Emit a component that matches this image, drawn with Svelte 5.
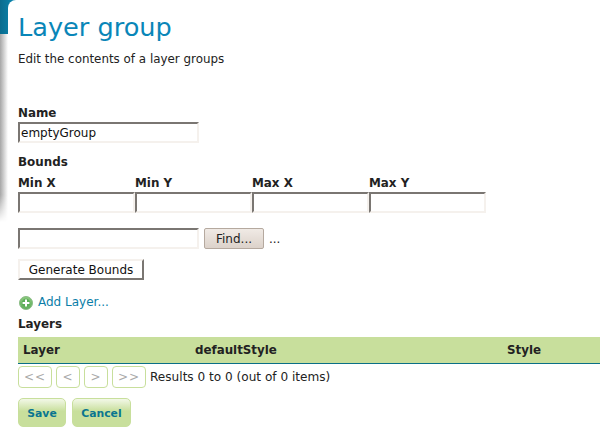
<script lang="ts">
  const bounds = ["Min X", "Min Y", "Max X", "Max Y"];
  const pager = ["<<", "<", ">", ">>"];
</script>

<div class="page">
  <div class="sidebar"></div>
  <main class="content">
    <h1>Layer group</h1>
    <p class="intro">Edit the contents of a layer groups</p>

    <label class="label name-label" for="name">Name</label>
    <input id="name" class="field wide" type="text" value="emptyGroup" />

    <div class="label bounds-label">Bounds</div>
    <div class="bounds">
      {#each bounds as b}
        <div class="bound">
          <span class="label">{b}</span>
          <input class="field bound-input" type="text" />
        </div>
      {/each}
    </div>

    <div class="find-row">
      <input class="field wide" type="text" />
      <button class="find">Find...</button>
      <span class="dots">...</span>
    </div>

    <button class="generate">Generate Bounds</button>

    <a class="add" href="#add">
      <svg width="14" height="14" viewBox="0 0 14 14">
        <defs>
          <radialGradient id="ball" cx="50%" cy="35%" r="65%">
            <stop offset="0" stop-color="#a8dc96" />
            <stop offset="1" stop-color="#5aa957" />
          </radialGradient>
        </defs>
        <circle cx="7" cy="7" r="6.5" fill="url(#ball)" stroke="#8cbc86" stroke-width="1" />
        <circle cx="7" cy="7" r="4.4" fill="#5cae58" />
        <path d="M7 3.6v6.8M3.6 7h6.8" stroke="#fff" stroke-width="2" />
      </svg>
      Add Layer...
    </a>

    <div class="label layers-label">Layers</div>
    <div class="table-head">
      <span class="col-layer">Layer</span>
      <span class="col-default">defaultStyle</span>
      <span class="col-style">Style</span>
    </div>

    <div class="pager">
      {#each pager as p}
        <button class="page-btn" disabled>{p}</button>
      {/each}
      <span class="results">Results 0 to 0 (out of 0 items)</span>
    </div>

    <div class="actions">
      <button class="action">Save</button>
      <button class="action">Cancel</button>
    </div>
  </main>
</div>

<style>
  :global(body) {
    margin: 0;
    background: #fff;
  }
  .page {
    display: flex;
    width: 600px;
    height: 448px;
    overflow: hidden;
    font-family: "DejaVu Sans", sans-serif;
    font-size: 11.9px;
    color: #222;
  }
  .sidebar {
    flex: 0 0 16px;
    height: 224px;
    background:
      linear-gradient(to right, #0a6c8e, #0a8ab4) top / 100% 34px no-repeat,
      linear-gradient(to right, #a6a6a6, #fff 8px);
    mask-image: linear-gradient(to bottom, #000 195px, transparent 222px);
  }
  .content {
    flex: 1;
    min-width: 0;
    margin-left: -8px;
    padding: 0 0 0 10px;
    background: #fff;
    border-top-left-radius: 8px;
    display: flex;
    flex-direction: column;
    align-items: flex-start;
    position: relative;
  }
  h1 {
    margin: 12px 0 0;
    font-size: 25.6px;
    line-height: 30px;
    font-weight: normal;
    color: #0986b8;
  }
  .intro {
    margin: 10px 0 0;
    line-height: 15px;
  }
  .label {
    font-weight: bold;
    line-height: 14px;
    display: block;
  }
  .name-label {
    margin-top: 39px;
  }
  .field {
    box-sizing: border-box;
    height: 21px;
    margin: 0;
    padding: 1px;
    border-style: solid;
    border-width: 2px;
    border-color: #7a7672 #f5f1ed #f5f1ed #7a7672;
    background: #fff;
    font: 12px "DejaVu Sans", sans-serif;
    color: #111;
  }
  .wide {
    width: 181px;
  }
  #name {
    margin-top: 2px;
  }
  .bounds-label {
    margin-top: 12px;
  }
  .bounds {
    display: flex;
    margin-top: 7px;
  }
  .bound {
    width: 117px;
  }
  .bound-input {
    width: 117px;
    display: block;
    margin-top: 2px;
  }
  .find-row {
    display: flex;
    align-items: center;
    margin-top: 15px;
    height: 21px;
  }
  .find {
    box-sizing: border-box;
    width: 60px;
    height: 21px;
    margin-left: 5px;
    padding: 0;
    border: 1px solid #b5a99f;
    border-radius: 2px;
    background: linear-gradient(#f0eae5, #dcd2ca);
    font: 12px "DejaVu Sans", sans-serif;
    color: #222;
  }
  .dots {
    margin-left: 5px;
  }
  .generate {
    box-sizing: border-box;
    width: 126px;
    height: 21px;
    margin-top: 10px;
    padding: 0;
    border-style: solid;
    border-width: 2px;
    border-color: #f5f1ed #7a7672 #7a7672 #f5f1ed;
    background: #fff;
    font: 12px "DejaVu Sans", sans-serif;
    color: #111;
  }
  .add {
    display: flex;
    align-items: center;
    gap: 5px;
    margin-top: 15px;
    margin-left: 1px;
    line-height: 15px;
    font-size: 12px;
    color: #0a7ea8;
    text-decoration: none;
  }
  .layers-label {
    margin-top: 7px;
  }
  .table-head {
    box-sizing: border-box;
    width: 582px;
    height: 27px;
    margin-top: 6px;
    display: flex;
    align-items: center;
    background: #c8df9c;
    border-bottom: 1px solid #0a6f86;
    font-weight: bold;
    font-size: 11.85px;
  }
  .col-layer {
    margin-left: 5px;
    width: 172px;
  }
  .col-default {
    width: 312px;
  }
  .pager {
    display: flex;
    align-items: center;
    gap: 4px;
    margin-top: 2px;
  }
  .page-btn {
    box-sizing: border-box;
    height: 22px;
    width: 24px;
    padding: 0;
    border: 1px solid #c8df9c;
    border-radius: 4px;
    background: #fff;
    font: 12px "DejaVu Sans", sans-serif;
    letter-spacing: 1px;
    color: #aaa;
  }
  .page-btn:first-child,
  .page-btn:nth-child(4) {
    width: 34px;
  }
  .results {
    font-size: 12.1px;
  }
  .actions {
    display: flex;
    gap: 6px;
    margin-top: 10px;
  }
  .action {
    box-sizing: border-box;
    height: 29px;
    width: 48px;
    padding: 1px 0 0;
    border: 1px solid #c8df9c;
    border-radius: 5px;
    background: linear-gradient(#f3f8e8, #c8df9c 45%, #c8df9c);
    font: bold 10.8px "DejaVu Sans", sans-serif;
    color: #0a7590;
  }
  .action + .action {
    width: 59px;
  }
</style>
